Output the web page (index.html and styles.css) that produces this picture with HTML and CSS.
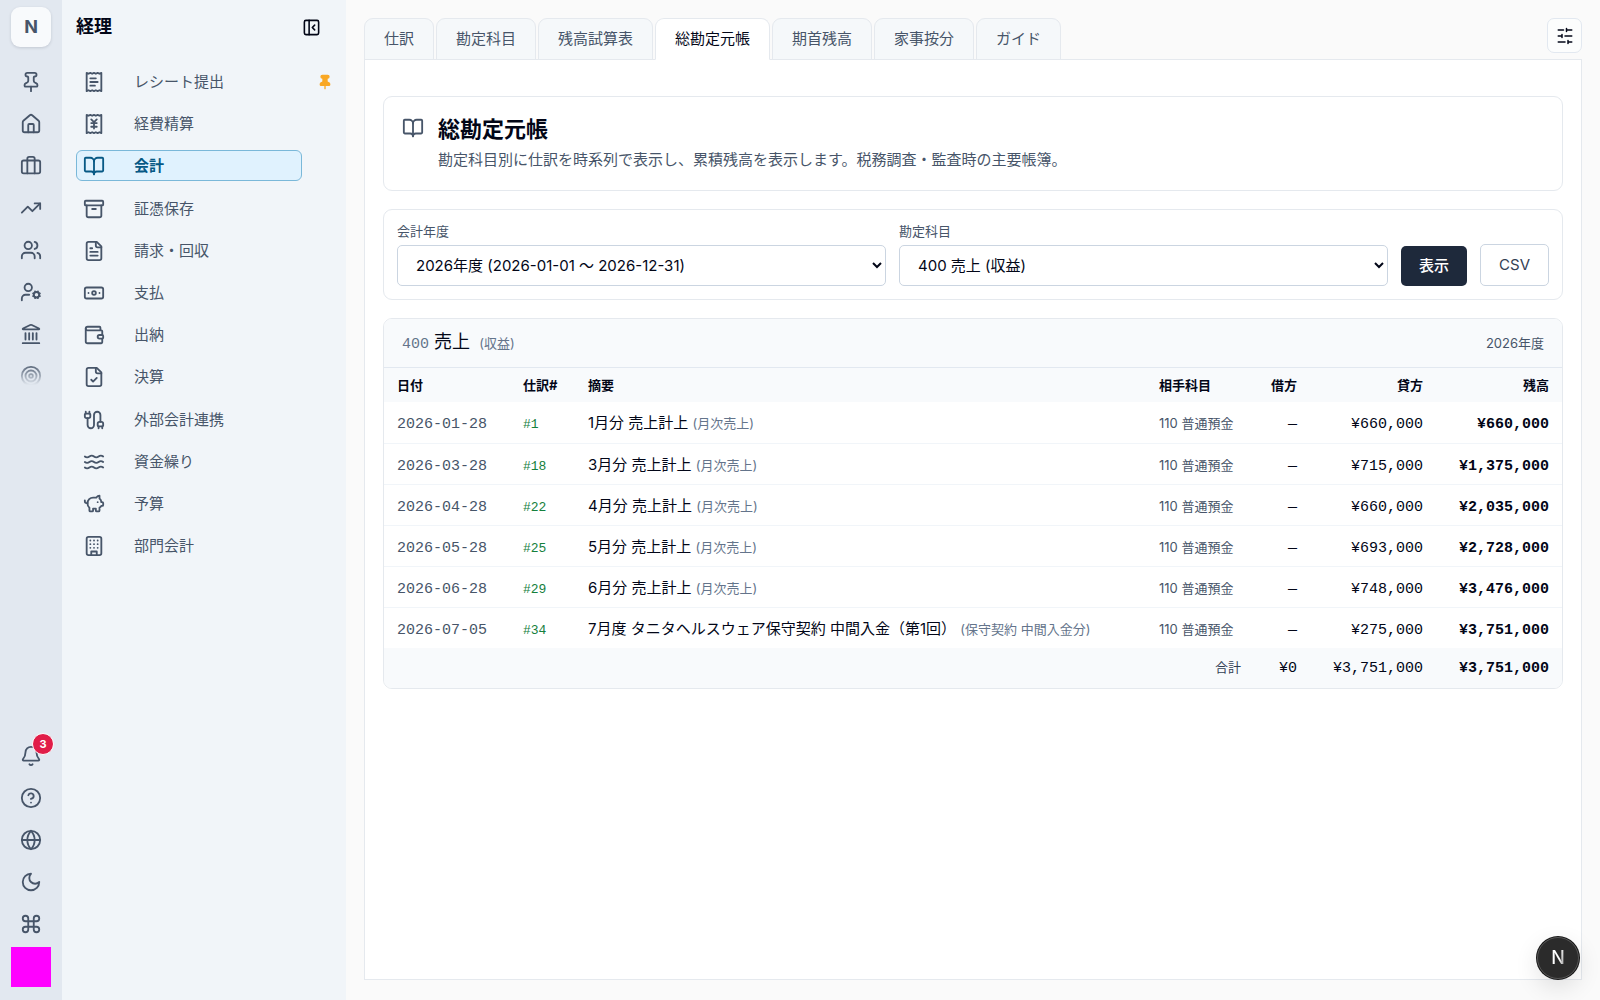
FILE: index.html
```html
<!DOCTYPE html>
<html lang="ja">
<head>
    <meta charset="UTF-8">
    <meta name="viewport" content="width=device-width, initial-scale=1.0">
    <title>総勘定元帳</title>
    <link rel="stylesheet" href="styles.css">
</head>
<body>

    <aside class="rail">
        <a class="rail-logo" href="#">N</a>
        <nav class="rail-nav" aria-label="メイン">
            <a href="#" aria-label="ピン留め"><svg class="icon" viewBox="0 0 24 24"><path d="M12 17v5"/><path d="M9 10.76a2 2 0 0 1-1.11 1.79l-1.78.9A2 2 0 0 0 5 15.24V16a1 1 0 0 0 1 1h12a1 1 0 0 0 1-1v-.76a2 2 0 0 0-1.11-1.79l-1.78-.9A2 2 0 0 1 15 10.76V7a1 1 0 0 1 1-1 2 2 0 0 0 0-4H8a2 2 0 0 0 0 4 1 1 0 0 1 1 1z"/></svg></a>
            <a href="#" aria-label="ホーム"><svg class="icon" viewBox="0 0 24 24"><path d="M15 21v-8a1 1 0 0 0-1-1h-4a1 1 0 0 0-1 1v8"/><path d="M3 10a2 2 0 0 1 .709-1.528l7-5.999a2 2 0 0 1 2.582 0l7 5.999A2 2 0 0 1 21 10v9a2 2 0 0 1-2 2H5a2 2 0 0 1-2-2z"/></svg></a>
            <a href="#" aria-label="業務"><svg class="icon" viewBox="0 0 24 24"><path d="M16 20V4a2 2 0 0 0-2-2h-4a2 2 0 0 0-2 2v16"/><rect x="2" y="6" width="20" height="14" rx="2"/></svg></a>
            <a href="#" aria-label="営業"><svg class="icon" viewBox="0 0 24 24"><path d="M16 7h6v6"/><path d="m22 7-8.5 8.5-5-5L2 17"/></svg></a>
            <a href="#" aria-label="メンバー"><svg class="icon" viewBox="0 0 24 24"><path d="M16 21v-2a4 4 0 0 0-4-4H6a4 4 0 0 0-4 4v2"/><circle cx="9" cy="7" r="4"/><path d="M22 21v-2a4 4 0 0 0-3-3.87"/><path d="M16 3.13a4 4 0 0 1 0 7.75"/></svg></a>
            <a href="#" aria-label="人事"><svg class="icon" viewBox="0 0 24 24"><path d="M10 15H6a4 4 0 0 0-4 4v2"/><circle cx="9" cy="7" r="4"/><circle cx="18" cy="15" r="3"/><path d="m14.305 16.53.923-.382M15.228 13.852l-.923-.383M16.852 12.228l-.383-.923M16.852 17.772l-.383.924M19.148 12.228l.383-.923M19.53 18.696l-.382-.924M20.772 13.852l.924-.383M20.772 16.148l.924.383"/></svg></a>
            <a href="#" aria-label="経理"><svg class="icon" viewBox="0 0 24 24"><path d="M10 18v-7M14 18v-7M18 18v-7M6 18v-7M3 22h18"/><path d="M11.12 2.198a2 2 0 0 1 1.76.006l7.866 3.847c.476.233.31.949-.22.949H3.474c-.53 0-.695-.716-.22-.949z"/></svg></a>
            <a href="#" aria-label="目標"><svg class="icon" viewBox="0 0 24 24"><circle cx="12" cy="12" r="10"/><circle cx="12" cy="12" r="6"/><circle cx="12" cy="12" r="2"/></svg></a>
        </nav>
        <div class="rail-tools">
            <button type="button" aria-label="通知"><svg class="icon" viewBox="0 0 24 24"><path d="M10.268 21a2 2 0 0 0 3.464 0"/><path d="M3.262 15.326A1 1 0 0 0 4 17h16a1 1 0 0 0 .74-1.673C19.41 13.956 18 12.499 18 8A6 6 0 0 0 6 8c0 4.499-1.411 5.956-2.738 7.326"/></svg><span class="badge">3</span></button>
            <button type="button" aria-label="ヘルプ"><svg class="icon" viewBox="0 0 24 24"><circle cx="12" cy="12" r="10"/><path d="M9.09 9a3 3 0 0 1 5.83 1c0 2-3 3-3 3"/><path d="M12 17h.01"/></svg></button>
            <button type="button" aria-label="言語"><svg class="icon" viewBox="0 0 24 24"><circle cx="12" cy="12" r="10"/><path d="M12 2a14.5 14.5 0 0 0 0 20 14.5 14.5 0 0 0 0-20"/><path d="M2 12h20"/></svg></button>
            <button type="button" aria-label="ダークモード"><svg class="icon" viewBox="0 0 24 24"><path d="M12 3a6 6 0 0 0 9 9 9 9 0 1 1-9-9Z"/></svg></button>
            <button type="button" aria-label="コマンド"><svg class="icon" viewBox="0 0 24 24"><path d="M15 6v12a3 3 0 1 0 3-3H6a3 3 0 1 0 3 3V6a3 3 0 1 0-3 3h12a3 3 0 1 0-3-3"/></svg></button>
        </div>
        <div class="avatar"></div>
    </aside>

    <aside class="sidebar">
        <header class="sidebar-header">
            <h2>経理</h2>
            <button type="button" class="collapse" aria-label="サイドバーを閉じる"><svg class="icon" viewBox="0 0 24 24"><rect x="3" y="3" width="18" height="18" rx="2"/><path d="M9 3v18"/><path d="m16 15-3-3 3-3"/></svg></button>
        </header>
        <nav class="menu" aria-label="経理">
            <ul>
                <li>
                    <a href="#"><svg class="icon" viewBox="0 0 24 24"><path d="M4 2v20l2-1 2 1 2-1 2 1 2-1 2 1 2-1 2 1V2l-2 1-2-1-2 1-2-1-2 1-2-1-2 1Z"/><path d="M14 8H8M16 12H8M13 16H8"/></svg>レシート提出</a>
                    <button type="button" class="pin" aria-label="ピンを外す"><svg class="icon" viewBox="0 0 24 24"><path d="M12 17v5"/><path d="M9 10.76a2 2 0 0 1-1.11 1.79l-1.78.9A2 2 0 0 0 5 15.24V16a1 1 0 0 0 1 1h12a1 1 0 0 0 1-1v-.76a2 2 0 0 0-1.11-1.79l-1.78-.9A2 2 0 0 1 15 10.76V7a1 1 0 0 1 1-1 2 2 0 0 0 0-4H8a2 2 0 0 0 0 4 1 1 0 0 1 1 1z"/></svg></button>
                </li>
                <li><a href="#"><svg class="icon" viewBox="0 0 24 24"><path d="M4 2v20l2-1 2 1 2-1 2 1 2-1 2 1 2-1 2 1V2l-2 1-2-1-2 1-2-1-2 1-2-1-2 1Z"/><path d="m12 10 3-3M9 7l3 3v7M9 11h6M9 15h6"/></svg>経費精算</a></li>
                <li><a href="#" class="active"><svg class="icon" viewBox="0 0 24 24"><path d="M12 7v14"/><path d="M3 18a1 1 0 0 1-1-1V4a1 1 0 0 1 1-1h5a4 4 0 0 1 4 4 4 4 0 0 1 4-4h5a1 1 0 0 1 1 1v13a1 1 0 0 1-1 1h-6a3 3 0 0 0-3 3 3 3 0 0 0-3-3z"/></svg>会計</a></li>
            </ul>
            <ul>
                <li><a href="#"><svg class="icon" viewBox="0 0 24 24"><rect x="2" y="3" width="20" height="5" rx="1"/><path d="M4 8v11a2 2 0 0 0 2 2h12a2 2 0 0 0 2-2V8"/><path d="M10 12h4"/></svg>証憑保存</a></li>
                <li><a href="#"><svg class="icon" viewBox="0 0 24 24"><path d="M15 2H6a2 2 0 0 0-2 2v16a2 2 0 0 0 2 2h12a2 2 0 0 0 2-2V7Z"/><path d="M14 2v4a2 2 0 0 0 2 2h4"/><path d="M10 9H8M16 13H8M16 17H8"/></svg>請求・回収</a></li>
                <li><a href="#"><svg class="icon" viewBox="0 0 24 24"><rect x="2" y="6" width="20" height="12" rx="2"/><circle cx="12" cy="12" r="2"/><path d="M6 12h.01M18 12h.01"/></svg>支払</a></li>
                <li><a href="#"><svg class="icon" viewBox="0 0 24 24"><path d="M19 7V4a1 1 0 0 0-1-1H5a2 2 0 0 0 0 4h15a1 1 0 0 1 1 1v4h-3a2 2 0 0 0 0 4h3a1 1 0 0 0 1-1v-2a1 1 0 0 0-1-1"/><path d="M3 5v14a2 2 0 0 0 2 2h15a1 1 0 0 0 1-1v-4"/></svg>出納</a></li>
                <li><a href="#"><svg class="icon" viewBox="0 0 24 24"><path d="M15 2H6a2 2 0 0 0-2 2v16a2 2 0 0 0 2 2h12a2 2 0 0 0 2-2V7Z"/><path d="M14 2v4a2 2 0 0 0 2 2h4"/><path d="m9 15 2 2 4-4"/></svg>決算</a></li>
            </ul>
            <ul>
                <li><a href="#"><svg class="icon" viewBox="0 0 24 24"><path d="M17 19a1 1 0 0 1-1-1v-2a2 2 0 0 1 2-2h2a2 2 0 0 1 2 2v2a1 1 0 0 1-1 1z"/><path d="M17 21v-2M21 21v-2M3 5V3M7 5V3"/><path d="M19 14V6.5a1 1 0 0 0-7 0v11a1 1 0 0 1-7 0V10"/><path d="M4 10a2 2 0 0 1-2-2V6a1 1 0 0 1 1-1h4a1 1 0 0 1 1 1v2a2 2 0 0 1-2 2z"/></svg>外部会計連携</a></li>
                <li><a href="#"><svg class="icon" viewBox="0 0 24 24"><path d="M2 6c.6.5 1.2 1 2.5 1C7 7 7 5 9.5 5c2.6 0 2.4 2 5 2 2.5 0 2.5-2 5-2 1.3 0 1.9.5 2.5 1"/><path d="M2 12c.6.5 1.2 1 2.5 1 2.5 0 2.5-2 5-2 2.6 0 2.4 2 5 2 2.5 0 2.5-2 5-2 1.3 0 1.9.5 2.5 1"/><path d="M2 18c.6.5 1.2 1 2.5 1 2.5 0 2.5-2 5-2 2.6 0 2.4 2 5 2 2.5 0 2.5-2 5-2 1.3 0 1.9.5 2.5 1"/></svg>資金繰り</a></li>
                <li><a href="#"><svg class="icon" viewBox="0 0 24 24"><path d="M11 17h3v2a1 1 0 0 0 1 1h2a1 1 0 0 0 1-1v-3a3.16 3.16 0 0 0 2-2h1a1 1 0 0 0 1-1v-2a1 1 0 0 0-1-1h-1a5 5 0 0 0-2-4V3a4 4 0 0 0-3.2 1.6l-.3.4H11a6 6 0 0 0-6 6v1a5 5 0 0 0 2 4v3a1 1 0 0 0 1 1h2a1 1 0 0 0 1-1z"/><path d="M16 10h.01"/><path d="M2 8v1a2 2 0 0 0 2 2h1"/></svg>予算</a></li>
                <li><a href="#"><svg class="icon" viewBox="0 0 24 24"><rect x="4" y="2" width="16" height="20" rx="2"/><path d="M9 22v-4h6v4"/><path d="M8 6h.01M12 6h.01M16 6h.01M8 10h.01M12 10h.01M16 10h.01M8 14h.01M12 14h.01M16 14h.01"/></svg>部門会計</a></li>
            </ul>
        </nav>
    </aside>

    <main class="content">
        <div class="topbar">
            <nav class="tabs" aria-label="会計">
                <a href="#">仕訳</a>
                <a href="#">勘定科目</a>
                <a href="#">残高試算表</a>
                <a href="#" class="active">総勘定元帳</a>
                <a href="#">期首残高</a>
                <a href="#">家事按分</a>
                <a href="#">ガイド</a>
            </nav>
            <button type="button" class="settings" aria-label="表示設定"><svg class="icon" viewBox="0 0 24 24"><path d="M21 4h-7M10 4H3M21 12h-9M8 12H3M21 20h-5M12 20H3M14 2v4M8 10v4M16 18v4"/></svg></button>
        </div>

        <div class="panel">
            <section class="card intro">
                <svg class="icon" viewBox="0 0 24 24"><path d="M12 7v14"/><path d="M3 18a1 1 0 0 1-1-1V4a1 1 0 0 1 1-1h5a4 4 0 0 1 4 4 4 4 0 0 1 4-4h5a1 1 0 0 1 1 1v13a1 1 0 0 1-1 1h-6a3 3 0 0 0-3 3 3 3 0 0 0-3-3z"/></svg>
                <div>
                    <h1>総勘定元帳</h1>
                    <p>勘定科目別に仕訳を時系列で表示し、累積残高を表示します。税務調査・監査時の主要帳簿。</p>
                </div>
            </section>

            <form class="card filter">
                <div class="field">
                    <label for="year">会計年度</label>
                    <select id="year">
                        <option>2026年度 (2026-01-01 〜 2026-12-31)</option>
                    </select>
                </div>
                <div class="field">
                    <label for="account">勘定科目</label>
                    <select id="account">
                        <option>400 売上 (収益)</option>
                    </select>
                </div>
                <button type="button" class="btn btn-primary">表示</button>
                <button type="button" class="btn btn-outline">CSV</button>
            </form>

            <section class="card ledger">
                <header class="ledger-header">
                    <h3><span class="code">400</span> 売上 <small>(収益)</small></h3>
                    <span class="year">2026年度</span>
                </header>
                <table>
                    <colgroup>
                        <col class="col-amount">
                        <col class="col-no">
                        <col>
                        <col class="col-account">
                        <col class="col-debit">
                        <col class="col-amount">
                        <col class="col-amount">
                    </colgroup>
                    <thead>
                        <tr>
                            <th>日付</th>
                            <th>仕訳#</th>
                            <th>摘要</th>
                            <th>相手科目</th>
                            <th class="num">借方</th>
                            <th class="num">貸方</th>
                            <th class="num">残高</th>
                        </tr>
                    </thead>
                    <tbody>
                        <tr>
                            <td class="date">2026-01-28</td>
                            <td class="no"><a href="#">#1</a></td>
                            <td>1月分 売上計上 <small>(月次売上)</small></td>
                            <td class="account">110 普通預金</td>
                            <td class="num">—</td>
                            <td class="num">¥660,000</td>
                            <td class="num balance">¥660,000</td>
                        </tr>
                        <tr>
                            <td class="date">2026-03-28</td>
                            <td class="no"><a href="#">#18</a></td>
                            <td>3月分 売上計上 <small>(月次売上)</small></td>
                            <td class="account">110 普通預金</td>
                            <td class="num">—</td>
                            <td class="num">¥715,000</td>
                            <td class="num balance">¥1,375,000</td>
                        </tr>
                        <tr>
                            <td class="date">2026-04-28</td>
                            <td class="no"><a href="#">#22</a></td>
                            <td>4月分 売上計上 <small>(月次売上)</small></td>
                            <td class="account">110 普通預金</td>
                            <td class="num">—</td>
                            <td class="num">¥660,000</td>
                            <td class="num balance">¥2,035,000</td>
                        </tr>
                        <tr>
                            <td class="date">2026-05-28</td>
                            <td class="no"><a href="#">#25</a></td>
                            <td>5月分 売上計上 <small>(月次売上)</small></td>
                            <td class="account">110 普通預金</td>
                            <td class="num">—</td>
                            <td class="num">¥693,000</td>
                            <td class="num balance">¥2,728,000</td>
                        </tr>
                        <tr>
                            <td class="date">2026-06-28</td>
                            <td class="no"><a href="#">#29</a></td>
                            <td>6月分 売上計上 <small>(月次売上)</small></td>
                            <td class="account">110 普通預金</td>
                            <td class="num">—</td>
                            <td class="num">¥748,000</td>
                            <td class="num balance">¥3,476,000</td>
                        </tr>
                        <tr>
                            <td class="date">2026-07-05</td>
                            <td class="no"><a href="#">#34</a></td>
                            <td>7月度 タニタヘルスウェア保守契約 中間入金（第1回） <small>(保守契約 中間入金分)</small></td>
                            <td class="account">110 普通預金</td>
                            <td class="num">—</td>
                            <td class="num">¥275,000</td>
                            <td class="num balance">¥3,751,000</td>
                        </tr>
                    </tbody>
                    <tfoot>
                        <tr>
                            <td colspan="4" class="total">合計</td>
                            <td class="num">¥0</td>
                            <td class="num">¥3,751,000</td>
                            <td class="num balance">¥3,751,000</td>
                        </tr>
                    </tfoot>
                </table>
            </section>
        </div>
    </main>

    <button type="button" class="dev-badge" aria-label="開発ツール"><span>N</span></button>

</body>
</html>
```
FILE: styles.css
```css
* {
    box-sizing: border-box;
}
body {
    margin: 0;
    display: flex;
    min-height: 100vh;
    font-family: Inter, "Noto Sans CJK JP", sans-serif;
    font-size: 15px;
    line-height: 24px;
    color: #020617;
    background-color: #fafafa;
}
h1, h2, h3, p, ul {
    margin: 0;
    padding: 0;
}
a {
    color: inherit;
    text-decoration: none;
}
button {
    padding: 0;
    border: none;
    background: none;
    color: inherit;
    font: inherit;
    cursor: pointer;
}
.icon {
    display: block;
    flex-shrink: 0;
    width: 22px;
    height: 22px;
    fill: none;
    stroke: currentColor;
    stroke-width: 2;
    stroke-linecap: round;
    stroke-linejoin: round;
}

/* rail */
.rail {
    display: flex;
    flex-direction: column;
    flex-shrink: 0;
    width: 62px;
    height: 100vh;
    padding: 7px 11px 13px;
    background-color: #e2e8f0;
    color: #475569;
}
.rail-logo {
    display: flex;
    flex-shrink: 0;
    align-items: center;
    justify-content: center;
    height: 40px;
    border-radius: 9px;
    background-color: #f8fafc;
    box-shadow: 0 1px 3px rgba(15, 23, 42, 0.15);
    font-size: 18px;
    font-weight: 700;
}
.rail-nav, .rail-tools {
    display: flex;
    flex-direction: column;
    gap: 4px;
}
.rail-nav {
    max-height: 322px;
    margin-top: 16px;
    overflow: hidden;
    mask-image: linear-gradient(#000 calc(100% - 22px), transparent);
}
.rail-nav a, .rail-tools button {
    position: relative;
    display: flex;
    flex-shrink: 0;
    align-items: center;
    justify-content: center;
    height: 38px;
}
.rail-tools {
    margin-top: auto;
    margin-bottom: 4px;
}
.badge {
    position: absolute;
    top: -4px;
    right: -3px;
    width: 22px;
    height: 22px;
    border: 1px solid #fff;
    border-radius: 50%;
    background-color: #e11d48;
    color: #fff;
    font-size: 11px;
    font-weight: 700;
    line-height: 20px;
    text-align: center;
}
.avatar {
    flex-shrink: 0;
    height: 40px;
    background-color: #ff00ff;
}

/* sidebar */
.sidebar {
    flex-shrink: 0;
    width: 284px;
    padding: 13px 13px 13px 14px;
    background-color: #f1f5f9;
}
.sidebar-header {
    display: flex;
    align-items: center;
    justify-content: space-between;
    height: 28px;
    padding-right: 12px;
}
.sidebar-header h2 {
    font-size: 18px;
    font-weight: 700;
}
.collapse .icon {
    width: 19px;
    height: 19px;
}
.menu {
    display: flex;
    flex-direction: column;
    gap: 12px;
    margin-top: 25px;
    color: #475569;
}
.menu ul {
    display: flex;
    flex-direction: column;
    gap: 11px;
    list-style: none;
}
.menu li {
    display: flex;
    align-items: center;
    justify-content: space-between;
}
.menu a {
    display: flex;
    align-items: center;
    gap: 29px;
    width: 226px;
    height: 31px;
    padding: 0 6px;
    border: 1px solid transparent;
    border-radius: 6px;
}
.menu a.active {
    border-color: #7ab8d9;
    background-color: #e0f2fe;
    color: #075985;
    font-weight: 700;
}
.pin {
    color: #f9a825;
}
.pin .icon {
    width: 16px;
    height: 16px;
    fill: currentColor;
}

/* content */
.content {
    display: flex;
    flex: 1;
    flex-direction: column;
    min-width: 0;
    padding: 18px 18px 20px;
}
.topbar {
    display: flex;
    align-items: flex-start;
    justify-content: space-between;
}
.tabs {
    display: flex;
    gap: 2px;
    margin-bottom: -1px;
}
.tabs a {
    height: 42px;
    padding: 8px 19px;
    border: 1px solid #e5e9ee;
    border-radius: 9px 9px 0 0;
    background-color: #f5f8fa;
    color: #475569;
}
.tabs a.active {
    position: relative;
    border-bottom-color: #fff;
    background-color: #fff;
    color: #020617;
}
.settings {
    display: flex;
    align-items: center;
    justify-content: center;
    width: 35px;
    height: 35px;
    border: 1px solid #e2e8f0;
    border-radius: 7px;
    background-color: #fcfdfd;
}
.settings .icon {
    width: 18px;
    height: 18px;
}
.panel {
    display: flex;
    flex: 1;
    flex-direction: column;
    gap: 18px;
    padding: 36px 18px;
    border: 1px solid #e5e9ee;
    background-color: #fff;
}
.card {
    border: 1px solid #e5e9ee;
    border-radius: 9px;
}
.intro {
    display: flex;
    gap: 14px;
    padding: 18px;
    color: #475569;
}
.intro .icon {
    margin-top: 2px;
}
.intro h1 {
    margin-bottom: 5px;
    color: #020617;
    font-size: 22px;
    line-height: 28px;
}
.filter {
    display: flex;
    align-items: flex-end;
    gap: 13px;
    padding: 13px;
}
.field {
    display: flex;
    flex: 1;
    flex-direction: column;
    gap: 5px;
    min-width: 0;
}
.field label {
    color: #475569;
    font-size: 13px;
    line-height: 17px;
}
.field select {
    height: 41px;
    padding: 0 14px;
    border: 1px solid #cbd5e1;
    border-radius: 5px;
    background-color: #fff;
    color: #020617;
    font: inherit;
}
.btn {
    height: 40px;
    padding: 0 18px;
    border-radius: 5px;
}
.btn-primary {
    background-color: #1e293b;
    color: #fff;
    font-weight: 500;
}
.btn-outline {
    height: 42px;
    border: 1px solid #cbd5e1;
    background-color: #fff;
    color: #334155;
}

/* ledger */
.ledger {
    overflow: hidden;
}
.ledger-header {
    display: flex;
    align-items: center;
    justify-content: space-between;
    height: 49px;
    padding: 0 18px;
    border-bottom: 1px solid #e2e8f0;
    background-color: #f8fafc;
}
.ledger-header h3 {
    font-size: 18px;
    font-weight: 400;
}
.ledger-header small {
    margin-left: 4px;
}
.ledger-header .code {
    color: #64748b;
    font-family: "Liberation Mono", monospace;
    font-size: 15px;
}
.ledger-header .year {
    color: #475569;
    font-size: 13px;
}
small {
    color: #64748b;
    font-size: 13px;
    font-weight: 400;
}
table {
    width: 100%;
    border-collapse: collapse;
    table-layout: fixed;
}
.col-amount {
    width: 126px;
}
.col-no {
    width: 65px;
}
.col-account {
    width: 108px;
}
.col-debit {
    width: 56px;
}
th, td {
    padding: 0 13px;
    text-align: left;
    white-space: nowrap;
}
th {
    height: 34px;
    background-color: #f8fafc;
    font-size: 13px;
    font-weight: 700;
}
td {
    height: 41px;
    padding-top: 9px;
    vertical-align: baseline;
}
tbody tr + tr {
    border-top: 1px solid #f1f5f9;
}
.date, .no, td.num {
    font-family: "Liberation Mono", monospace;
}
.date {
    color: #475569;
}
.no {
    color: #15803d;
    font-size: 13px;
}
.account {
    color: #475569;
    font-size: 13px;
}
.num, .total {
    text-align: right;
}
.balance {
    font-weight: 700;
}
tfoot td {
    height: 40px;
    padding-top: 7px;
    background-color: #f8fafc;
}
.total {
    color: #334155;
    font-size: 13px;
}

/* floating badge */
.dev-badge {
    position: fixed;
    right: 21px;
    bottom: 21px;
    width: 42px;
    height: 42px;
    border: 1px solid #555;
    border-radius: 50%;
    background-color: #2b2b2b;
    box-shadow: 0 0 0 1px #171717, 0 8px 24px rgba(0, 0, 0, 0.12);
    font-size: 18px;
    font-weight: 500;
}
.dev-badge span {
    background: linear-gradient(100deg, #fff 60%, #777);
    background-clip: text;
    color: transparent;
}
```
